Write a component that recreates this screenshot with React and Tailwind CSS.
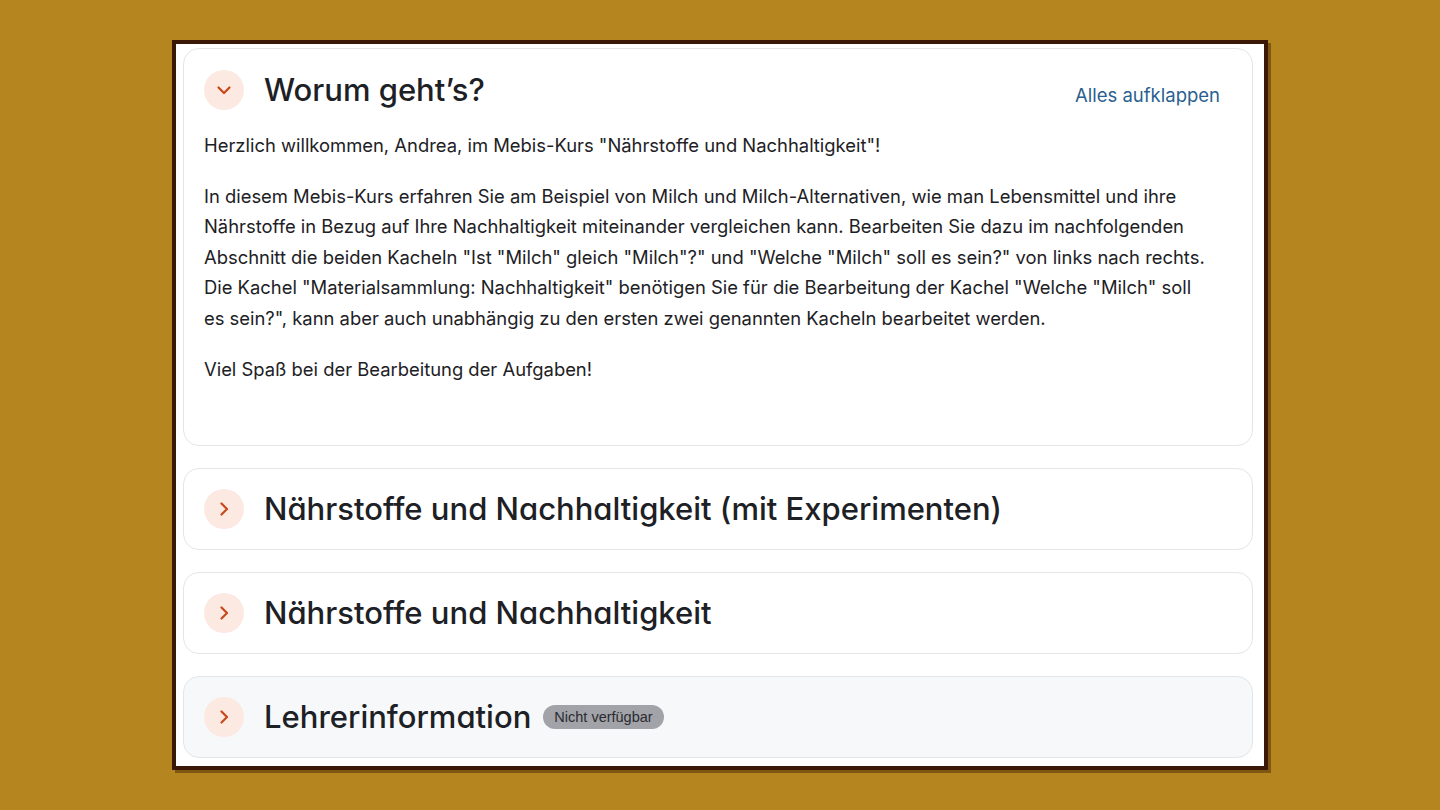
import React from "react";

const headFont = "font-['Inter',sans-serif] [font-feature-settings:'cv11','ss01']";

function Chevron({ down }) {
  return (
    <div className="flex h-10 w-10 shrink-0 items-center justify-center rounded-full bg-[#fce9e1]">
      <svg width="18" height="18" viewBox="0 0 18 18" fill="none" className={down ? "" : "-rotate-90"}>
        <path d="M3.5 6.5 L9 12 L14.5 6.5" stroke="#c9481a" strokeWidth="2.2" strokeLinecap="round" strokeLinejoin="round" />
      </svg>
    </div>
  );
}

function Section({ title, badge, muted }) {
  return (
    <div className={`flex h-[82px] items-center gap-5 rounded-2xl border border-[#e3e5e8] px-5 ${muted ? "bg-[#f7f8fa]" : "bg-white"}`}>
      <Chevron />
      <h3 className={`${headFont} text-[31px] font-medium leading-10 text-[#1d2125]`}>{title}</h3>
      {badge && (
        <span className="-ml-2 rounded-full bg-[#a2a3a8] px-[11px] py-[3px] font-['Liberation_Sans',sans-serif] text-[14.5px] leading-[18px] text-[#2a2b30]">
          {badge}
        </span>
      )}
    </div>
  );
}

export default function App() {
  return (
    <div className="flex h-[810px] w-[1440px] items-center justify-center bg-[#b5851f]">
      <div className="h-[730px] w-[1096px] overflow-hidden border-4 border-[#3b1806] bg-white shadow-[3px_3px_0_rgba(60,30,5,0.45)]">
        <div className="flex flex-col gap-[22px] pl-[7px] pr-[11px] pt-1">
          <div className="rounded-2xl border border-[#e3e5e8] bg-white px-5 pb-[61px] pt-[21px]">
            <div className="flex items-center gap-5">
              <Chevron down />
              <h3 className={`${headFont} text-[31px] font-medium leading-10 text-[#1d2125]`}>Worum geht’s?</h3>
              <a className="ml-auto mr-3 mt-3 font-['Inter',sans-serif] text-[18.5px] text-[#2a5f8f]">Alles aufklappen</a>
            </div>
            <div className="mt-[20px] pr-4 font-['Inter',sans-serif] text-[18.4px] leading-[30.6px] text-[#1d2125]">
              <p>Herzlich willkommen, Andrea, im Mebis-Kurs "Nährstoffe und Nachhaltigkeit"!</p>
              <p className="mt-5">
                In diesem Mebis-Kurs erfahren Sie am Beispiel von Milch und Milch-Alternativen, wie man Lebensmittel und ihre Nährstoffe in Bezug auf Ihre Nachhaltigkeit miteinander vergleichen kann. Bearbeiten Sie dazu im nachfolgenden Abschnitt die beiden Kacheln "Ist "Milch" gleich "Milch"?" und "Welche "Milch" soll es sein?" von links nach rechts. Die Kachel "Materialsammlung: Nachhaltigkeit" benötigen Sie für die Bearbeitung der Kachel "Welche "Milch" soll es sein?", kann aber auch unabhängig zu den ersten zwei genannten Kacheln bearbeitet werden.
              </p>
              <p className="mt-5">Viel Spaß bei der Bearbeitung der Aufgaben!</p>
            </div>
          </div>
          <Section title="Nährstoffe und Nachhaltigkeit (mit Experimenten)" />
          <Section title="Nährstoffe und Nachhaltigkeit" />
          <Section title="Lehrerinformation" badge="Nicht verfügbar" muted />
        </div>
      </div>
    </div>
  );
}
